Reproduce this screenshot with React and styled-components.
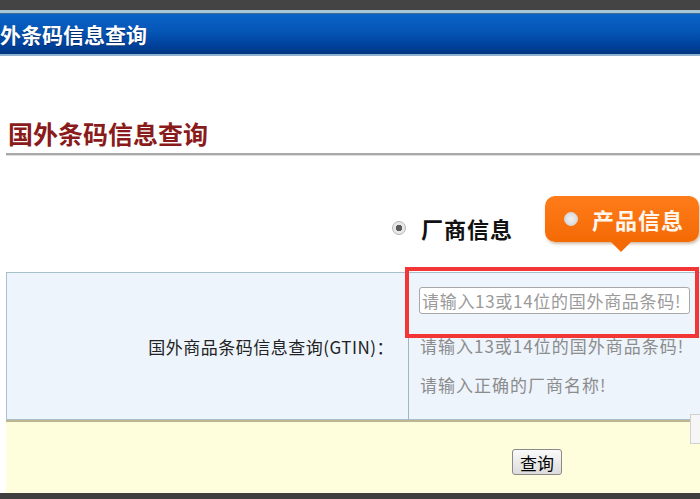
import React from 'react';
import styled, { createGlobalStyle } from 'styled-components';

const cjk = '"Noto Sans CJK SC", "Noto Sans", sans-serif';

const GlobalStyle = createGlobalStyle`
  html, body {
    margin: 0;
    padding: 0;
    background: #ffffff;
  }
  body {
    font-family: ${cjk};
  }
`;

export default function App() {
  return (
    <>
      <GlobalStyle />
      <Page>
        <TopStrip />
        <Banner>
          <BannerTitle>外条码信息查询</BannerTitle>
        </Banner>

        <Main>
          <SectionTitle>国外条码信息查询</SectionTitle>

          <TabRow>
            <RadioOption>
              <Radio checked />
              <RadioLabel>厂商信息</RadioLabel>
            </RadioOption>
            <ActiveTab>
              <Radio light />
              <RadioLabel light>产品信息</RadioLabel>
            </ActiveTab>
          </TabRow>

          <QueryTable>
            <LabelCell>国外商品条码信息查询(GTIN)：</LabelCell>
            <FieldCell>
              <SearchInput placeholder="请输入13或14位的国外商品条码!" />
              <Hint first>请输入13或14位的国外商品条码!</Hint>
              <Hint>请输入正确的厂商名称!</Hint>
            </FieldCell>
          </QueryTable>

          <ActionBar>
            <QueryButton>查询</QueryButton>
          </ActionBar>
        </Main>

        <BottomStrip />

        <Highlight />
        <SideTab />
      </Page>
    </>
  );
}

const Page = styled.div`
  position: relative;
  display: flex;
  flex-direction: column;
  width: 700px;
  height: 499px;
  overflow: hidden;
`;

const TopStrip = styled.div`
  height: 10px;
  background: #444444;
`;

const Banner = styled.div`
  display: flex;
  align-items: center;
  height: 41px;
  border-top: 3px solid #a9c6d8;
  box-shadow: inset 0 1px 0 #3d6f97;
  border-bottom: 2px solid #8fb3cf;
  background: linear-gradient(#0b63c8 0%, #0556b6 45%, #00419c 80%, #00357f 100%);
`;

const BannerTitle = styled.span`
  color: #ffffff;
  font-size: 21px;
  font-weight: 700;
  text-shadow: 0 1px 1px #002a66;
`;

const Main = styled.div`
  flex: 1;
  display: flex;
  flex-direction: column;
  padding-left: 6px;
`;

const SectionTitle = styled.h2`
  margin: 60px 0 0;
  padding: 0 0 3px 2px;
  font-size: 25px;
  line-height: 34px;
  font-weight: 700;
  color: #8a1b1b;
  border-bottom: 2px solid #a8a8a8;
  box-shadow: 0 1px 0 #dddddd;
`;

const TabRow = styled.div`
  display: flex;
  align-items: center;
  gap: 32px;
  height: 48px;
  margin-top: 47px;
  padding-left: 386px;
`;

const RadioOption = styled.label`
  display: flex;
  align-items: center;
  gap: 15px;
  padding-top: 4px;
`;

const ActiveTab = styled.div`
  position: relative;
  display: flex;
  align-items: center;
  gap: 14px;
  width: 154px;
  height: 46px;
  box-sizing: border-box;
  padding-left: 19px;
  margin-top: -14px;
  border-radius: 10px;
  background: linear-gradient(#ff7c1a, #f46a05);
  box-shadow: 1px 2px 3px rgba(120, 60, 0, 0.35);

  &::after {
    content: '';
    position: absolute;
    left: 66px;
    bottom: -10px;
    border-left: 10px solid transparent;
    border-right: 10px solid transparent;
    border-top: 10px solid #f46a05;
  }
`;

const Radio = styled.span`
  width: 14px;
  height: 14px;
  border-radius: 50%;
  box-sizing: border-box;
  flex-shrink: 0;
  border: 1px solid ${(p) => (p.light ? '#d8d8d8' : '#b4b4b4')};
  background: ${(p) =>
    p.checked
      ? 'radial-gradient(circle, #5a5a5a 0 3px, #e8e8e8 3.5px)'
      : p.light
      ? 'radial-gradient(circle, #f0f0f0, #d4d4d4)'
      : '#ffffff'};
`;

const RadioLabel = styled.span`
  font-size: 22px;
  font-weight: 700;
  color: ${(p) => (p.light ? '#fff6ee' : '#111111')};
  letter-spacing: 1px;
`;

const QueryTable = styled.div`
  display: grid;
  grid-template-columns: 402px 1fr;
  height: 146px;
  margin-top: 22px;
  border: 1px solid #a8c0ca;
  border-right: none;
  background: #edf4fc;
`;

const LabelCell = styled.div`
  display: flex;
  align-items: center;
  justify-content: flex-end;
  padding-right: 14px;
  font-size: 17px;
  letter-spacing: 0.5px;
  color: #222222;
  border-right: 1px solid #9fb6c4;
`;

const FieldCell = styled.div`
  display: flex;
  flex-direction: column;
  padding: 14px 0 0 10px;
`;

const SearchInput = styled.input`
  width: 271px;
  height: 27px;
  box-sizing: border-box;
  padding: 0 2px;
  border: 1px solid #a8a8a8;
  border-radius: 3px;
  background: #ffffff;
  font-family: ${cjk};
  font-size: 17px;
  letter-spacing: 0.7px;
  outline: none;

  &::placeholder {
    color: #9a9a9a;
  }
`;

const Hint = styled.div`
  margin-top: ${(p) => (p.first ? '22px' : '19px')};
  padding-left: 1px;
  font-size: 17px;
  letter-spacing: 1px;
  line-height: 20px;
  color: #8c8c8c;
`;

const ActionBar = styled.div`
  display: flex;
  flex: 1;
  padding: 27px 0 0 506px;
  border-top: 2px solid #bdb68e;
  background: #fffedc;
`;

const QueryButton = styled.button`
  width: 50px;
  height: 26px;
  padding: 0;
  font-family: ${cjk};
  font-size: 17px;
  color: #000000;
  border: 1px solid #8a8a8a;
  border-radius: 3px;
  background: linear-gradient(#fafafa, #dcdcdc);
`;

const BottomStrip = styled.div`
  height: 6px;
  background: #3f3f3f;
`;

const Highlight = styled.div`
  position: absolute;
  left: 405px;
  top: 267px;
  width: 294px;
  height: 71px;
  box-sizing: border-box;
  border: 4px solid #f23636;
  pointer-events: none;
`;

const SideTab = styled.div`
  position: absolute;
  right: -4px;
  top: 414px;
  width: 12px;
  height: 28px;
  border: 1px solid #d0d0d0;
  background: #f6f6f6;
`;
